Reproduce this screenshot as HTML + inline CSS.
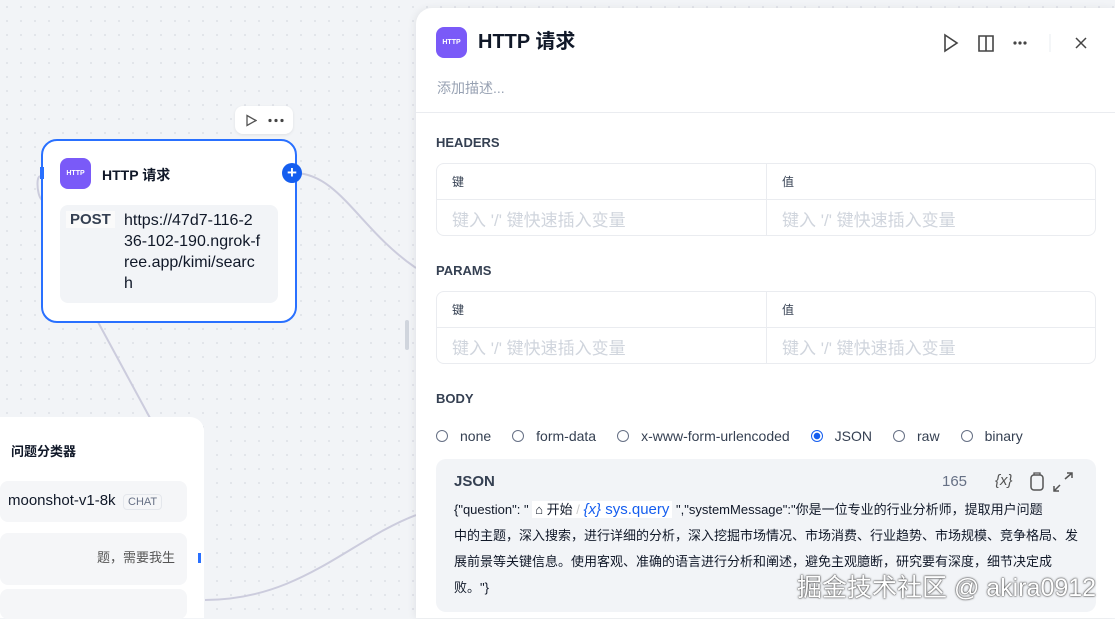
<!DOCTYPE html>
<html><head><meta charset="utf-8"><style>
*{box-sizing:border-box;margin:0;padding:0}
body{width:1115px;height:618px;overflow:hidden;position:relative;background:#f2f4f7;background-image:radial-gradient(#dde0e6 1px,transparent 1px);background-size:14px 14px;font-family:"Liberation Sans","Noto Sans CJK SC",sans-serif;color:#101828}
.abs{position:absolute}
.panel{left:416px;top:8px;width:699px;height:610px;background:#fff;border-top-left-radius:16px;box-shadow:-2px 0 8px rgba(0,0,0,.06)}
.icon{background:#7a5af8;border-radius:7px;color:#fff;font-size:7px;font-weight:bold;display:flex;align-items:center;justify-content:center}
.sec{font-size:13px;font-weight:bold;color:#354052}
.tbl{border:1px solid #eaecf0;border-radius:8px;width:660px;height:73px;left:20px}
.tbl .h{height:36px;border-bottom:1px solid #eaecf0;display:flex;font-size:12px;color:#354052}
.tbl .r{display:flex;font-size:17px;color:#d0d5dd;height:36px}
.tbl .c{width:50%;padding-left:15px;display:flex;align-items:center}
.tbl .c+ .c{border-left:1px solid #eaecf0}
.radio{display:inline-flex;align-items:center;font-size:14px;color:#354052;margin-right:21px}
.radio i{width:12px;height:12px;border:1px solid #667085;border-radius:50%;margin-right:12px;display:inline-block}
.radio i.on{border:1px solid #155eef;background:radial-gradient(#155eef 3px,#fff 3.5px)}
</style></head><body>
<svg class="abs" style="left:0;top:0" width="416" height="618"><path d="M296 173 C340 175 360 230 416 268" stroke="#ccd" stroke-width="2" fill="none"/><path d="M98 322 L150 418" stroke="#ccd" stroke-width="2" fill="none"/><path d="M205 600 C300 600 350 540 416 515" stroke="#ccd" stroke-width="2" fill="none"/><path d="M42 178 C36 170 36 195 42 200" stroke="#ccd" stroke-width="2" fill="none"/></svg>
<div class="abs" style="left:235px;top:106px;width:58px;height:28px;background:#fff;border-radius:8px;box-shadow:0 1px 3px rgba(0,0,0,.08)">
<svg class="abs" style="left:10px;top:8px" width="12" height="13"><path d="M2 1.5L11 6.5L2 11.5Z" fill="none" stroke="#555" stroke-width="1.3"/></svg>
<svg class="abs" style="left:33px;top:12px" width="18" height="5"><circle cx="2" cy="2.5" r="1.6" fill="#444"/><circle cx="8" cy="2.5" r="1.6" fill="#444"/><circle cx="14" cy="2.5" r="1.6" fill="#444"/></svg></div>
<div class="abs" style="left:41px;top:139px;width:256px;height:184px;background:#fff;border:2px solid #2970ff;border-radius:16px">
<div class="abs icon" style="left:17px;top:17px;width:31px;height:31px;border-radius:8px">HTTP</div>
<div class="abs" style="left:59px;top:24px;font-size:14px;font-weight:bold">HTTP 请求</div>
<div class="abs" style="left:17px;top:64px;width:218px;height:98px;background:#f2f4f7;border-radius:8px">
<span class="abs" style="left:6px;top:6px;background:#fafafa;padding:0 4px;font-size:15px;font-weight:bold;color:#354052">POST</span>
<div class="abs" style="left:64px;top:5px;font-size:16px;line-height:21px;color:#101828;white-space:nowrap">https://47d7-116-2<br>36-102-190.ngrok-f<br>ree.app/kimi/searc<br>h</div></div></div>
<div class="abs" style="left:40px;top:167px;width:4px;height:12px;background:#2970ff"></div>
<div class="abs" style="left:282px;top:163px;width:20px;height:20px;border-radius:50%;background:#155eef;color:#fff;font-size:17px;font-weight:bold;text-align:center;line-height:20px">+</div>
<div class="abs" style="left:405px;top:320px;width:4px;height:30px;background:#d0d5dd;border-radius:2px"></div>
<div class="abs" style="left:0;top:417px;width:204px;height:201px;background:#fff;border-top-right-radius:14px">
<div class="abs" style="left:11px;top:24px;font-size:13px;font-weight:bold">问题分类器</div>
<div class="abs" style="left:0;top:64px;width:187px;height:41px;background:#f5f6f8;border-radius:8px"><span class="abs" style="left:8px;top:11px;font-size:15px">moonshot-v1-8k</span><span class="abs" style="left:123px;top:13px;font-size:11px;color:#667085;border:1px solid #e4e7ec;border-radius:4px;padding:1px 4px">CHAT</span></div>
<div class="abs" style="left:0;top:116px;width:187px;height:52px;background:#f5f6f8;border-radius:8px"><span class="abs" style="left:97px;top:14px;font-size:13px;color:#555">题，需要我生</span></div>
<div class="abs" style="left:0;top:172px;width:187px;height:30px;background:#f5f6f8;border-radius:8px"></div>
<div class="abs" style="left:198px;top:136px;width:3px;height:10px;background:#2970ff"></div>
</div>
<div class="panel abs">
<div class="abs icon" style="left:20px;top:19px;width:31px;height:31px;border-radius:8px">HTTP</div>
<div class="abs" style="left:62px;top:22px;font-size:20px;font-weight:bold;line-height:24px">HTTP 请求</div>
<svg class="abs" style="left:526px;top:24px" width="150" height="22"><path d="M3 3L15 11L3 19Z" fill="none" stroke="#444" stroke-width="1.6"/><path d="M37 4h14v15h-14z M44 4v15" fill="none" stroke="#444" stroke-width="1.6"/><circle cx="73" cy="11" r="1.6" fill="#444"/><circle cx="78" cy="11" r="1.6" fill="#444"/><circle cx="83" cy="11" r="1.6" fill="#444"/><path d="M108 2v18" stroke="#eaecf0"/><path d="M134 6l10 10M144 6l-10 10" stroke="#444" stroke-width="1.5"/></svg>
<div class="abs" style="left:21px;top:70px;font-size:14px;color:#98a2b3">添加描述...</div>
<div class="abs" style="left:0;top:104px;width:699px;height:1px;background:#eaecf0"></div>
<div class="abs sec" style="left:20px;top:127px">HEADERS</div>
<div class="abs tbl" style="top:155px"><div class="h"><div class="c">键</div><div class="c">值</div></div><div class="r"><div class="c">键入 '/' 键快速插入变量</div><div class="c">键入 '/' 键快速插入变量</div></div></div>
<div class="abs sec" style="left:20px;top:255px">PARAMS</div>
<div class="abs tbl" style="top:283px"><div class="h"><div class="c">键</div><div class="c">值</div></div><div class="r"><div class="c">键入 '/' 键快速插入变量</div><div class="c">键入 '/' 键快速插入变量</div></div></div>
<div class="abs sec" style="left:20px;top:383px">BODY</div>
<div class="abs" style="left:20px;top:420px;white-space:nowrap"><span class="radio"><i></i>none</span><span class="radio"><i></i>form-data</span><span class="radio"><i></i>x-www-form-urlencoded</span><span class="radio"><i class="on"></i>JSON</span><span class="radio"><i></i>raw</span><span class="radio"><i></i>binary</span></div>
<div class="abs" style="left:20px;top:451px;width:660px;height:153px;background:#f2f4f7;border-radius:10px">
<div class="abs" style="left:18px;top:14px;font-size:15px;font-weight:bold;color:#354052">JSON</div>
<div class="abs" style="left:506px;top:14px;font-size:15px;color:#667085">165</div>
<div class="abs" style="left:559px;top:13px;font-size:15px;color:#555;font-style:italic">{x}</div>
<svg class="abs" style="left:592px;top:12px" width="50" height="22"><rect x="3" y="4" width="12" height="15" rx="3" fill="none" stroke="#555" stroke-width="1.5"/><path d="M6 4v-2h6v2" stroke="#555" stroke-width="1.3" fill="none"/><path d="M37 8l7-6M39 2h5v5M32 14l-6 6M26 15v5h5" stroke="#555" stroke-width="1.5" fill="none"/></svg>
<div class="abs" style="left:18px;top:38px;font-size:13px;line-height:26px;color:#101828;white-space:nowrap">{"question": " <span style="background:#fff;padding:1px 3px">⌂ 开始 <span style="color:#ccc">/</span> <span style="color:#155eef;font-size:15px"><i>{x}</i> sys.query</span></span> ","systemMessage":"你是一位专业的行业分析师，提取用户问题<br>中的主题，深入搜索，进行详细的分析，深入挖掘市场情况、市场消费、行业趋势、市场规模、竞争格局、发<br>展前景等关键信息。使用客观、准确的语言进行分析和阐述，避免主观臆断，研究要有深度，细节决定成<br>败。"}</div>
<div class="abs" style="left:361px;top:109px;font-size:25px;color:#fff;text-shadow:0 0 2px #333,0 0 1px #333;white-space:nowrap">掘金技术社区 @ akira0912</div>
</div>
</div>
</body></html>
